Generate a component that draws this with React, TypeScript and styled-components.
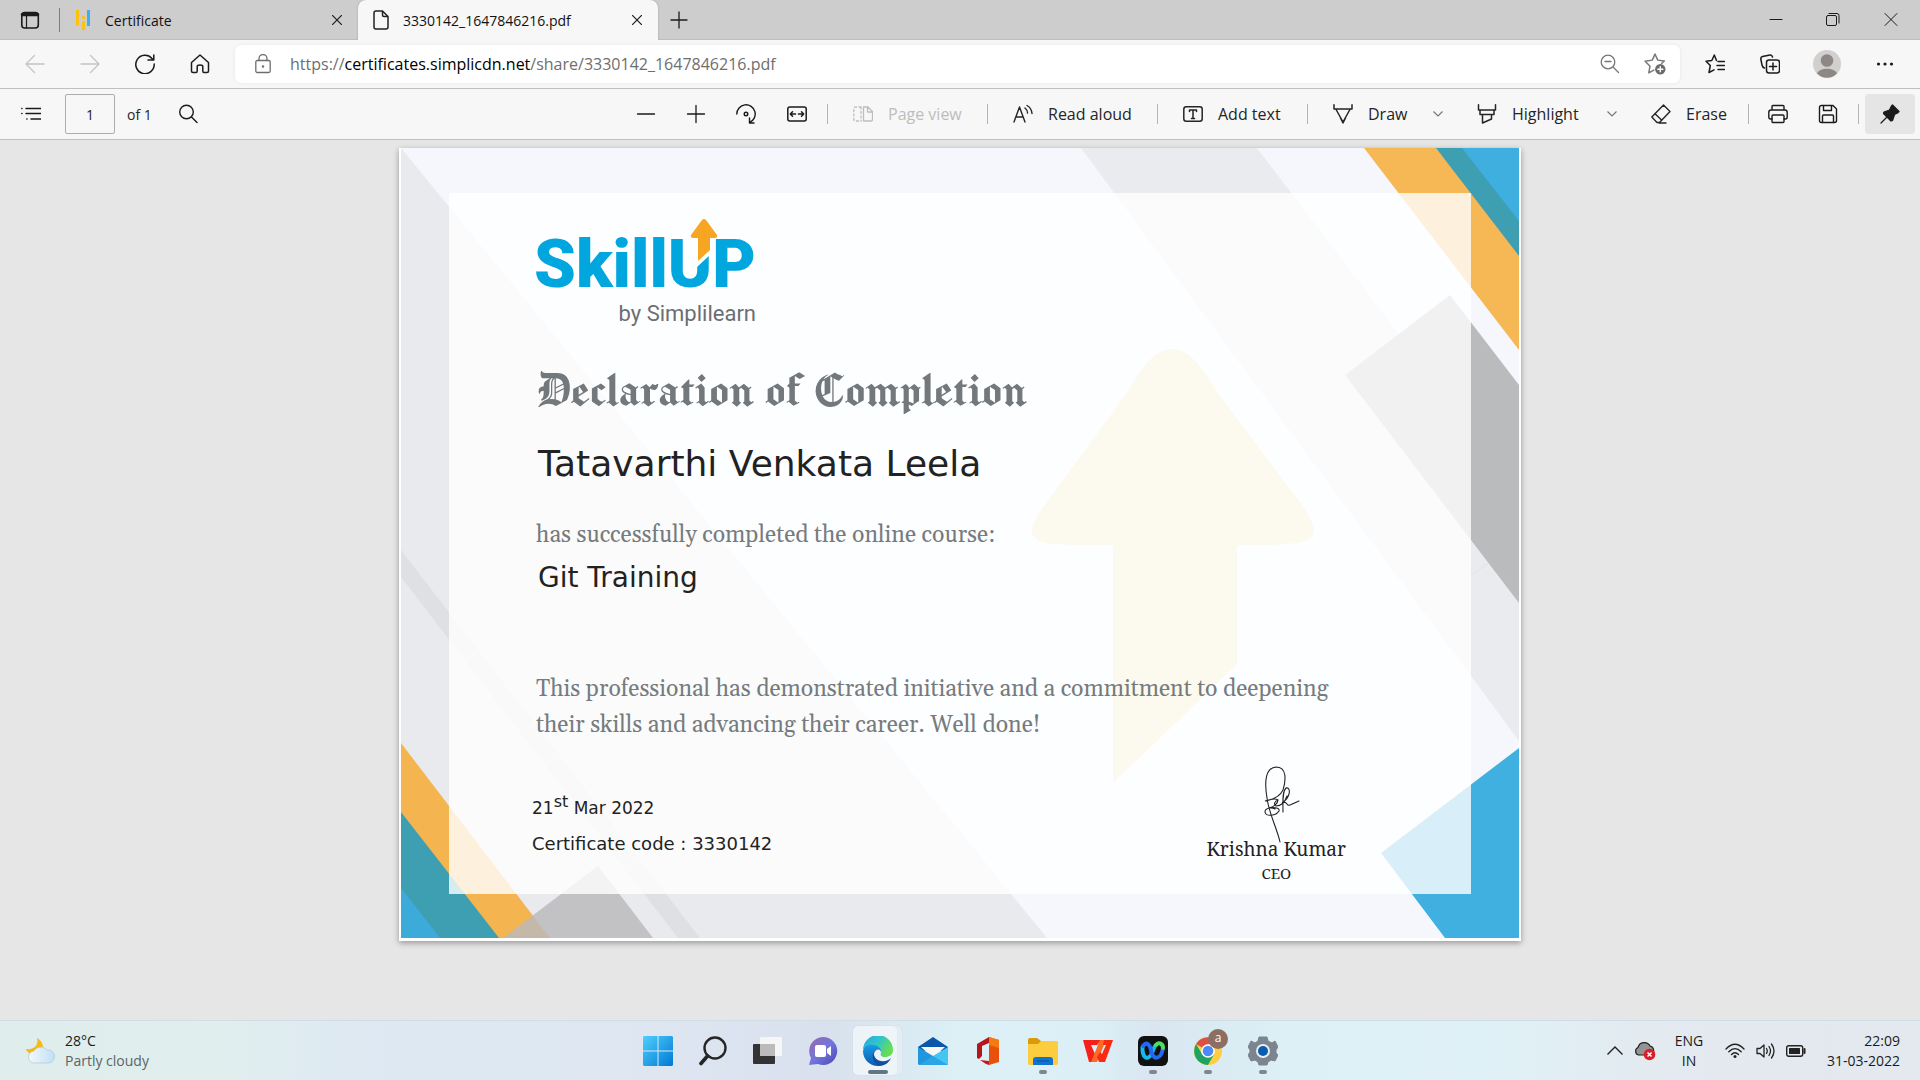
import React from "react";
import styled, { createGlobalStyle, css } from "styled-components";

const ui = `"Segoe UI", "Open Sans", "Noto Sans", sans-serif`;
const serif = `Gelasio, Georgia, "Liberation Serif", serif`;
const blackletter = `"Old English Text MT", "Manufacturing Consent", "UnifrakturMaguntia", "Liberation Serif", serif`;
const humanist = `"DejaVu Sans", Verdana, sans-serif`;

const GlobalStyle = createGlobalStyle`
  * { box-sizing: border-box; }
  body { margin: 0; font-family: ${ui}; color: #1b1b1b; background: #e6e6e6; }
  button, input { font: inherit; color: inherit; }
  h1, h2, p { margin: 0; font-weight: 400; }
`;

const Screen = styled.div`
  display: flex;
  flex-direction: column;
  min-height: 100vh;
`;

/* ---------- shared ---------- */

const IconButton = styled.button<{ $w?: number; $faded?: boolean }>`
  display: flex;
  align-items: center;
  justify-content: center;
  flex: none;
  width: ${(p) => p.$w ?? 50}px;
  height: 40px;
  padding: 0;
  border: 0;
  border-radius: 4px;
  background: none;
  color: ${(p) => (p.$faded ? "#c4c4c4" : "#1b1b1b")};
`;

type IconProps = { children: React.ReactNode; size?: number; sw?: number };
const Icon = ({ children, size = 20, sw = 1.3 }: IconProps) => (
  <svg
    width={size}
    height={size}
    viewBox="0 0 20 20"
    fill="none"
    stroke="currentColor"
    strokeWidth={sw}
    strokeLinecap="round"
    strokeLinejoin="round"
    aria-hidden="true"
  >
    {children}
  </svg>
);

/* ---------- tab strip ---------- */

const TabStrip = styled.header`
  display: flex;
  align-items: stretch;
  height: 40px;
  background: #cdcdcd;
  box-shadow: inset 0 -1px 0 #bdbdbd;
`;

const TabMenu = styled.div`
  display: flex;
  align-items: center;
  width: 60px;
  &::after {
    content: "";
    width: 1px;
    height: 24px;
    background: #7c7c7c;
  }
`;

const Tab = styled.div<{ $active?: boolean }>`
  display: flex;
  align-items: center;
  gap: 14px;
  width: ${(p) => (p.$active ? 300 : 298)}px;
  padding: 0 6px 0 15px;
  font-size: 14px;
  color: #111;
  ${(p) =>
    p.$active &&
    css`
      border-radius: 8px 8px 0 0;
      background: #f7f7f7;
      box-shadow: 0 0 2px #999;
      clip-path: inset(0 -3px 0 -3px);
    `}
`;

const TabTitle = styled.span`
  flex: 1;
  white-space: nowrap;
`;

const WindowButtons = styled.div`
  display: flex;
  margin-left: auto;
`;

/* ---------- address bar ---------- */

const AddressRow = styled.nav`
  display: flex;
  align-items: center;
  height: 49px;
  padding: 0 8px 0 7px;
  background: #f7f7f7;
  border-bottom: 1px solid #bfbfbf;
`;

const AddressField = styled.div`
  display: flex;
  align-items: center;
  flex: 1;
  height: 38px;
  margin: 0 7px 0 8px;
  padding-right: 3px;
  border-radius: 6px;
  background: #fff;
  box-shadow: 0 0 4px rgba(0, 0, 0, 0.07);
  color: #6e6e6e;
`;

const Url = styled.div`
  flex: 1;
  font-size: 16px;
  line-height: 24px;
  white-space: nowrap;
  outline: none;
  b {
    font-weight: 400;
    color: #000;
  }
`;

const Avatar = styled.svg`
  width: 28px;
  height: 28px;
`;

/* ---------- document toolbar ---------- */

const Toolbar = styled.div`
  display: flex;
  align-items: center;
  height: 51px;
  padding: 0 5px 0 6px;
  background: #f7f7f7;
  border-bottom: 1px solid #bfbfbf;
  color: #252525;
`;

const PageInput = styled.input`
  width: 50px;
  height: 40px;
  margin: 0 12px 0 9px;
  padding: 0;
  border: 1px solid #adadad;
  border-radius: 2px;
  background: #f7f7f7;
  font-size: 14px;
  text-align: center;
`;

const PageCount = styled.label`
  width: 34px;
  font-size: 14px;
  white-space: nowrap;
`;

const Tools = styled.div`
  display: flex;
  align-items: center;
  margin-left: auto;
`;

const Tool = styled.button<{ $w: number }>`
  display: flex;
  align-items: center;
  gap: 15px;
  flex: none;
  width: ${(p) => p.$w}px;
  height: 40px;
  padding: 0 0 0 21px;
  border: 0;
  background: none;
  font-size: 16px;
  white-space: nowrap;
  &:disabled {
    color: #bdbdbd;
  }
  svg {
    flex: none;
  }
`;

const Divider = styled.span`
  width: 1px;
  height: 20px;
  margin: 0 4px 0 5px;
  background: #b5b5b5;
`;

const PinButton = styled(IconButton)`
  margin-left: 2px;
  background: #e5e5e5;
`;

/* ---------- certificate ---------- */

const Viewer = styled.main`
  display: flex;
  flex: 1;
  justify-content: center;
  align-items: flex-start;
  padding: 8px 0 40px;
  background: #e6e6e6;
`;

const Sheet = styled.article`
  width: 100%;
  max-width: 1122px;
  padding: 0 2px 3px;
  background: #fff;
  box-shadow: 0 2px 6px rgba(0, 0, 0, 0.35);
`;

const SheetBody = styled.div`
  position: relative;
  padding: 86px 173px 55px 131px;
`;

const Artwork = styled.svg`
  position: absolute;
  inset: 0;
  width: 100%;
  height: 100%;
`;

const Content = styled.div`
  position: relative;
  display: flex;
  flex-direction: column;
  align-items: flex-start;
`;

const Logo = styled.div`
  position: relative;
  display: flex;
  flex-direction: column;
  align-items: flex-end;
  gap: 6px;
  padding-left: 2px;
  font-family: Roboto, sans-serif;
`;

const LogoName = styled.span`
  font-size: 67px;
  font-weight: 900;
  line-height: 60px;
  color: #00a6dd;
`;

const LogoArrow = styled.svg`
  position: absolute;
  left: 157px;
  top: -16px;
  width: 30px;
  height: 54px;
`;

const LogoOwner = styled.span`
  font-size: 22px;
  line-height: 28px;
  color: #6d6e71;
`;

const Title = styled.h1`
  margin-top: 33px;
  padding-left: 4px;
  font-family: ${blackletter};
  font-size: 53px;
  line-height: 56px;
  color: #72787b;
  white-space: nowrap;
`;

const Recipient = styled.h2`
  margin-top: 25px;
  padding-left: 6px;
  font-family: ${humanist};
  font-size: 36px;
  line-height: 44px;
  color: #222;
`;

const Statement = styled.p<{ $top: number }>`
  margin-top: ${(p) => p.$top}px;
  padding-left: 4px;
  font-family: ${serif};
  font-size: 23px;
  line-height: 36px;
  color: #767b7e;
`;

const Course = styled.h2`
  margin-top: 6px;
  padding-left: 6px;
  font-family: ${humanist};
  font-size: 28px;
  line-height: 36px;
  color: #222;
`;

const Footer = styled.footer`
  display: flex;
  justify-content: space-between;
  align-items: flex-end;
  align-self: stretch;
  margin-top: 22px;
`;

const Issue = styled.div`
  padding-bottom: 21px;
  font-family: ${humanist};
  font-size: 18px;
  line-height: 36px;
  color: #222;
  time {
    display: block;
    font-size: 17px;
  }
  sup {
    font-size: 16px;
    line-height: 0;
  }
`;

const Signatory = styled.div`
  display: flex;
  flex-direction: column;
  align-items: center;
  font-family: "Noto Serif", ${serif};
  font-size: 15px;
  line-height: 20px;
  color: #222;
  strong {
    margin: -6px 0 2px;
    font-size: 19px;
    font-weight: 400;
    line-height: 24px;
  }
`;

/* ---------- taskbar ---------- */

const Taskbar = styled.footer`
  display: grid;
  grid-template-columns: 1fr auto 1fr;
  height: 60px;
  border-top: 1px solid #cfdde4;
  background: linear-gradient(
    90deg,
    #dfeeed 0%,
    #e0eeee 12%,
    #dee9f3 19%,
    #dde6f1 34%,
    #d8e1ed 43%,
    #dcf0f6 50%,
    #dceff6 57%,
    #d9e6f1 60%,
    #dcf0f5 67%,
    #dff1f6 78%,
    #e3eaf0 86%,
    #e4e8ef 100%
  );
`;

const Weather = styled.button`
  display: flex;
  align-items: center;
  justify-self: start;
  gap: 9px;
  padding: 0 0 0 26px;
  border: 0;
  background: none;
  text-align: left;
  font-size: 14px;
  line-height: 20px;
  span {
    display: block;
    color: #5b6466;
  }
`;

const Apps = styled.div`
  display: flex;
  align-items: center;
`;

const App_ = styled.button<{ $active?: boolean; $running?: boolean }>`
  position: relative;
  display: flex;
  align-items: center;
  justify-content: center;
  width: 49px;
  height: 49px;
  margin: 0 3px;
  padding: 0;
  border: 0;
  border-radius: 5px;
  background: ${(p) => (p.$active ? "rgba(255,255,255,0.55)" : "none")};
  box-shadow: ${(p) =>
    p.$active ? "0 0 1px #b7c4cf, inset -5px 0 0 rgba(215,228,238,0.5)" : "none"};
  &::after {
    content: "";
    position: absolute;
    bottom: 1px;
    width: ${(p) => (p.$active ? 20 : 8)}px;
    height: 4px;
    border-radius: 2px;
    background: ${(p) =>
      p.$active ? "#5f7686" : p.$running ? "#7f868c" : "transparent"};
  }
`;

const Badge = styled.span`
  position: absolute;
  top: 3px;
  right: 4px;
  width: 20px;
  height: 20px;
  border-radius: 50%;
  background: #8d6e63;
  color: #fff;
  font-size: 12px;
  line-height: 18px;
`;

const Tray = styled.div`
  display: flex;
  align-items: center;
  justify-self: end;
  padding-right: 20px;
  font-size: 14px;
  line-height: 20px;
`;

const TrayButton = styled.button<{ $w: number; $align?: string }>`
  display: block;
  width: ${(p) => p.$w}px;
  padding: 0;
  border: 0;
  background: none;
  text-align: ${(p) => p.$align ?? "center"};
  white-space: nowrap;
  svg {
    display: block;
    margin: 0 auto;
  }
`;

/* ---------- drawings ---------- */

const CloseIcon = () => (
  <svg width="10" height="10" viewBox="0 0 10 10" stroke="currentColor" strokeWidth="1.2" aria-hidden="true">
    <path d="M0 0 10 10M10 0 0 10" />
  </svg>
);

const Chevron = () => (
  <svg width="10" height="6" viewBox="0 0 10 6" fill="none" stroke="#777" strokeWidth="1.2" aria-hidden="true">
    <path d="M.5.5 5 5 9.500.5" />
  </svg>
);

const Background = () => (
  <Artwork viewBox="0 0 1118 790" preserveAspectRatio="none" aria-hidden="true">
    <rect width="1118" height="790" fill="#f6f7fc" />
    <path d="M0 0 646 790H0Z" fill="#e9eaee" />
    <path d="M0 402 299 790H277L0 429Z" fill="#dfe0e4" />
    <path d="M0 595 149 790H0Z" fill="#f4b450" />
    <path d="M0 664 98 790H0Z" fill="#3e9fb2" />
    <path d="M0 740 39 790H0Z" fill="#3dabda" />
    <path d="M197 718 252 790H102Z" fill="#b9babc" fillOpacity=".82" />
    <path d="M680 0H856L1118 344V593Z" fill="#eaebef" />
    <path d="M1087 415 1021 465" stroke="#e2e3e7" />
    <path d="M944 227 1049 147 1118 237V455Z" fill="#babbbd" />
    <path d="M963 0H1118V202Z" fill="#f6b755" />
    <path d="M1035 0H1118V108Z" fill="#3e9fb3" />
    <path d="M1061 0H1118V73Z" fill="#3eafde" />
    <path d="M1118 600 980 705 1044 790H1118Z" fill="#3fb0df" />
    <rect x="48" y="45" width="1022" height="701" fill="#fff" fillOpacity=".8" />
    <path
      d="M771 201C749 201 737 229 723 249L661 333C645 356 631 371 631 384 631 397 660 397 690 397H712V635L836 516V397H853C890 397 913 396 913 382 911 368 898 352 883 333L820 249C806 230 793 201 771 201Z"
      fill="#fcfaee"
    />
  </Artwork>
);

const Signature = () => (
  <svg width="50" height="77" viewBox="-12 0 50 77" fill="none" stroke="#222" strokeWidth="1.1" strokeLinecap="round" aria-hidden="true">
    <path d="M17 76C14 62 6 48 4 32 1 14 3 2 13 1 24 1 23 14 20 24 16 32 8 34 2 35 8 33 13 32 15 34 15 38 10 41 6 42 12 41 17 42 16 45 13 50 3 51 2 46 2 42 8 41 12 43M15 34C12 35 10 38 13 40 18 40 22 36 24 30M20 46C20 36 19 26 23 22 28 21 28 31 19 37 25 34 23 41 27 39L36 35" />
  </svg>
);

const StartIcon = () => (
  <svg width="30" height="30" viewBox="0 0 30 30" aria-hidden="true">
    <defs>
      <linearGradient id="start" x1="0" y1="0" x2="1" y2="1">
        <stop stopColor="#4fd0fc" />
        <stop offset="1" stopColor="#0078d4" />
      </linearGradient>
    </defs>
    <path fill="url(#start)" d="M1 0H14.500V14.500H0V1ZM15.500 0H29L30 1V14.500H15.500ZM0 15.500H14.500V30H1L0 29ZM15.500 15.500H30V29L29 30H15.500Z" />
  </svg>
);

const SearchIcon = () => (
  <svg width="30" height="30" viewBox="0 0 30 30" fill="none" stroke="#262626" aria-hidden="true">
    <circle cx="17" cy="12" r="10.500" strokeWidth="2.400" />
    <path d="M9.500 20 3 27.500" strokeWidth="3.600" strokeLinecap="round" />
  </svg>
);

const TaskViewIcon = () => (
  <svg width="30" height="30" viewBox="0 0 30 30" aria-hidden="true">
    <rect x="0" y="8" width="22" height="20" rx="1" fill="#333" />
    <rect x="7" y="1" width="22" height="19" rx="1" fill="#f6f6f6" />
    <path d="M7 8H22V20H7Z" fill="#bbb" />
  </svg>
);

const ChatIcon = () => (
  <svg width="30" height="30" viewBox="0 0 30 30" aria-hidden="true">
    <defs>
      <linearGradient id="chat" x1="0" y1="0" x2="1" y2="1">
        <stop stopColor="#9a6aa8" />
        <stop offset=".5" stopColor="#7276dd" />
        <stop offset="1" stopColor="#4b47b4" />
      </linearGradient>
    </defs>
    <path d="M15 1A14 14 0 1 1 10 28L1 29 3 22A14 14 0 0 1 15 1Z" fill="url(#chat)" />
    <rect x="7" y="9" width="11" height="12" rx="2" fill="#fff" />
    <path d="M19 13 23 10V20L19 17Z" fill="#fff" />
  </svg>
);

const EdgeIcon = () => (
  <svg width="30" height="30" viewBox="0 0 30 30" aria-hidden="true">
    <defs>
      <linearGradient id="edgeTop" x1="0" y1="0" x2="1" y2=".5">
        <stop stopColor="#2aa5de" />
        <stop offset=".5" stopColor="#2fc3cf" />
        <stop offset="1" stopColor="#65df50" />
      </linearGradient>
      <linearGradient id="edgeSide" x1="0" y1="0" x2="0" y2="1">
        <stop stopColor="#1a9be4" />
        <stop offset="1" stopColor="#0b5cb0" />
      </linearGradient>
    </defs>
    <path d="M0 14A15 15 0 0 1 30 14C30 19 26 21 22 21 18 21 17 19 18 17 19 13 15 10 10 10 5 10 1 12 0 14Z" fill="url(#edgeTop)" />
    <path d="M0 15C1 11 5 8 10 9 15 9 19 13 18 16 17 12 12 13 11 18 11 23 14 28 19 29.500 8 32 0 24 0 15Z" fill="url(#edgeSide)" />
    <path d="M12 15C9 18 12 24 18 25 22 26 26 24 28 22 26 27 21 30 16 30 9 27 8 18 12 15Z" fill="#11519d" />
  </svg>
);

const MailIcon = () => (
  <svg width="30" height="30" viewBox="0 0 30 30" aria-hidden="true">
    <path d="M0 11 15 1 30 11V15H0Z" fill="#0a56a8" />
    <path d="M3 11H27L15 22Z" fill="#f7f7f7" />
    <path d="M0 11 30 29H1L0 28Z" fill="#2196dc" />
    <path d="M30 11V28L29 29 15 20Z" fill="#43c6f2" />
    <path d="M15 20 30 29H1Z" fill="#2aa5e6" />
  </svg>
);

const OfficeIcon = () => (
  <svg width="30" height="30" viewBox="0 0 30 30" aria-hidden="true">
    <path d="M16 1 26 4V26L16 29Z" fill="#e8500c" />
    <path d="M16 1V7L9 10V20L6 23 4 22V8Z" fill="#b4161b" />
    <path d="M7 24 16 25V29L13 28Z" fill="#c41c1c" />
    <path d="M16 1 26 4V12L16 9Z" fill="#f37b10" />
  </svg>
);

const FolderIcon = () => (
  <svg width="30" height="30" viewBox="0 0 30 30" aria-hidden="true">
    <path d="M0 4Q0 2 2 2H9L13 5V11H0Z" fill="#dc9a0a" />
    <path d="M0 8H10L13 5H29L30 6V28L29 29H1L0 28Z" fill="#fdcd40" />
    <path d="M5 29V24Q5 21 8 21H22Q25 21 25 24V29Z" fill="#1173cf" />
    <path d="M9 25H21" stroke="#0b4f9c" />
  </svg>
);

const WpsIcon = () => (
  <svg width="30" height="30" viewBox="0 0 30 30" aria-hidden="true">
    <path d="M0 4H18L14 9H8L12 18 9 26H6Z" fill="#f8201b" />
    <path d="M8 26 17 4H23L14 26Z" fill="#ff6a20" />
    <path d="M21 4H30L22 26H16L14 21 17 16 19 18 23 9H20Z" fill="#f92c12" />
  </svg>
);

const WebexIcon = () => (
  <svg width="30" height="30" viewBox="0 0 30 30" fill="none" aria-hidden="true">
    <rect width="30" height="30" rx="6" fill="#111" />
    <path d="M4.500 11C4 21 9 25 13 19 15 16 16 10 18 9" stroke="#13b9ed" strokeWidth="4" strokeLinecap="round" />
    <path d="M5 10C9 5 12 9 13 14 15 25 23 24 25 12" stroke="#2468f2" strokeWidth="4" strokeLinecap="round" />
    <path d="M18 9C20 6 25 7 25 12" stroke="#4be05b" strokeWidth="4" strokeLinecap="round" />
  </svg>
);

const ChromeIcon = () => (
  <svg width="28" height="28" viewBox="0 0 28 28" aria-hidden="true">
    <circle cx="14" cy="14" r="14" fill="#ffcd40" />
    <path d="M14 14 2 7A14 14 0 0 1 26 7H14Z" fill="#dd5144" />
    <path d="M2 7A14 14 0 0 0 14 28L20 17.500 14 14 8 17Z" fill="#1da462" />
    <circle cx="14" cy="14" r="6.800" fill="#fff" />
    <circle cx="14" cy="14" r="5.300" fill="#4c8bf5" />
  </svg>
);

const SettingsIcon = () => (
  <svg width="30" height="30" viewBox="0 0 30 30" aria-hidden="true">
    <path
      d="M11 1H19L20 5 24 7 27 5 30 11 28 14V17L30 19 27 25 23 24 20 26 19 29H11L10 26 7 24 3 25 0 19 2 16V14L0 11 3 5 7 7 10 5Z"
      fill="#7c858f"
      stroke="#7c858f"
      strokeLinejoin="round"
    />
    <circle cx="15" cy="15" r="7" fill="#e9eef2" />
    <circle cx="15" cy="15" r="5" fill="#0b5cad" />
  </svg>
);

const apps = [
  { name: "Start", icon: <StartIcon /> },
  { name: "Search", icon: <SearchIcon /> },
  { name: "Task View", icon: <TaskViewIcon /> },
  { name: "Chat", icon: <ChatIcon /> },
  { name: "Microsoft Edge", icon: <EdgeIcon />, active: true },
  { name: "Mail", icon: <MailIcon /> },
  { name: "Office", icon: <OfficeIcon /> },
  { name: "File Explorer", icon: <FolderIcon />, running: true },
  { name: "WPS Office", icon: <WpsIcon /> },
  { name: "Webex", icon: <WebexIcon />, running: true },
  { name: "Google Chrome", icon: <ChromeIcon />, running: true, badge: "a" },
  { name: "Settings", icon: <SettingsIcon />, running: true },
];

/* ---------- page ---------- */

export default function App() {
  return (
    <Screen>
      <GlobalStyle />
      <TabStrip>
        <TabMenu>
          <IconButton $w={59} aria-label="Tab actions">
            <Icon sw={1.6}>
              <rect x="1.800" y="2.500" width="16.500" height="15.500" rx="3" />
              <path d="M2.500 4.500H17.500" strokeWidth="3.500" />
              <path d="M6.500 6V18" strokeWidth="1.200" />
            </Icon>
          </IconButton>
        </TabMenu>
        <Tab>
          <svg width="16" height="20" viewBox="0 0 16 20" aria-hidden="true">
            <path d="M2.500 0V15.500M8.500 11V20" stroke="#fdc20f" strokeWidth="3" />
            <path d="M13.500 0V16" stroke="#3bb2ec" strokeWidth="3" />
            <circle cx="8.500" cy="7.500" r="1.700" fill="#fdc20f" />
          </svg>
          <TabTitle>Certificate</TabTitle>
          <IconButton $w={30} aria-label="Close tab">
            <CloseIcon />
          </IconButton>
        </Tab>
        <Tab $active>
          <svg width="16" height="20" viewBox="1 0 16 20" fill="none" stroke="#222" strokeWidth="1.500" aria-hidden="true">
            <path d="M4 1H10.500L16 6.500V17Q16 19 14 19H4Q2 19 2 17V3Q2 1 4 1ZM10.500 1V5Q10.500 6.500 12 6.500H16" />
          </svg>
          <TabTitle>3330142_1647846216.pdf</TabTitle>
          <IconButton $w={30} aria-label="Close tab">
            <CloseIcon />
          </IconButton>
        </Tab>
        <IconButton $w={42} aria-label="New tab">
          <Icon>
            <path d="M10 2V18M2 10H18" />
          </Icon>
        </IconButton>
        <WindowButtons>
          <IconButton $w={57} aria-label="Minimize">
            <Icon sw={1}>
              <path d="M4 9.500H16" />
            </Icon>
          </IconButton>
          <IconButton $w={58} aria-label="Restore">
            <Icon sw={1}>
              <rect x="3.500" y="5.500" width="10" height="10" rx="1.500" />
              <path d="M6 3.500H14Q16 3.500 16 5.500V13" />
            </Icon>
          </IconButton>
          <IconButton $w={58} aria-label="Close">
            <Icon sw={1}>
              <path d="M4 3.500 16 15.500M16 3.500 4 15.500" />
            </Icon>
          </IconButton>
        </WindowButtons>
      </TabStrip>

      <AddressRow>
        <IconButton $w={55} $faded aria-label="Back">
          <Icon>
            <path d="M19 10H1M9.500 1.500 1 10 9.500 18.500" />
          </Icon>
        </IconButton>
        <IconButton $w={55} $faded aria-label="Forward">
          <Icon>
            <path d="M1 10H19M10.500 1.500 19 10 10.500 18.500" />
          </Icon>
        </IconButton>
        <IconButton $w={55} aria-label="Refresh">
          <Icon sw={1.5}>
            <path d="M19.200 10A9.200 9.200 0 1 1 17 4.500L18.500 6M18.800 1V6H13" />
          </Icon>
        </IconButton>
        <IconButton $w={55} aria-label="Home">
          <Icon sw={1.5}>
            <path d="M1.500 8.500 10 1 18.500 8.500V17Q18.500 18.500 17 18.500H14Q12.800 18.500 12.800 17V12.500Q12.800 11 10 11T7.200 12.500V17Q7.200 18.500 6 18.500H3Q1.500 18.500 1.500 17Z" />
          </Icon>
        </IconButton>
        <AddressField>
          <IconButton as="span" $w={55}>
            <Icon sw={1.3}>
              <g stroke="#6e6e6e">
                <rect x="2.800" y="6.500" width="14.400" height="12" rx="1.500" />
                <path d="M6 6.500V4.500a4 4 0 0 1 8 0V6.500" />
                <circle cx="10" cy="12.500" r=".6" fill="#6e6e6e" />
              </g>
            </Icon>
          </IconButton>
          <Url role="textbox" aria-label="Address" contentEditable suppressContentEditableWarning spellCheck={false}>
            https://<b>certificates.simplicdn.net</b>/share/3330142_1647846216.pdf
          </Url>
          <IconButton $w={45} aria-label="Zoom level">
            <Icon>
              <g stroke="#767676">
                <circle cx="8" cy="8" r="6.800" />
                <path d="M13 13 18.500 18.500M5 7.500H11" />
              </g>
            </Icon>
          </IconButton>
          <IconButton $w={45} aria-label="Add to favorites">
            <Icon size={22}>
              <g stroke="#767676">
                <path d="M10 1 12.500 6.500 18.500 7.200 16 9.500M10 1 7.500 6.500 1 7.500 5.500 12 4.300 18 9 15.500" />
                <circle cx="14.800" cy="14.800" r="4.700" fill="#6b6b6b" stroke="none" />
                <path d="M14.800 12.500V17.100M12.500 14.800H17.100" stroke="#fff" />
              </g>
            </Icon>
          </IconButton>
        </AddressField>
        <IconButton $w={55} aria-label="Favorites">
          <Icon sw={1.5}>
            <path d="M11.500 6.500 9.300 1 6.800 6.500 1 7.200 5.300 11.500 4 18.500 9 15.800M13 7.500H19.500M12 11.500H19.500M13 15.500H19.500" />
          </Icon>
        </IconButton>
        <IconButton $w={55} aria-label="Collections">
          <Icon sw={1.5}>
            <rect x="6.500" y="6" width="13" height="13" rx="2.500" />
            <path d="M13 9V16M9.500 12.500H16.500M4.500 14Q2.500 13.500 2 11L.8 5Q.6 3 2.500 2.500L10 1Q12 .7 12.500 3" />
          </Icon>
        </IconButton>
        <IconButton $w={60} aria-label="Profile">
          <Avatar viewBox="0 0 28 28" aria-hidden="true">
            <circle cx="14" cy="14" r="14" fill="#d2d0ce" />
            <circle cx="14" cy="10.500" r="6.300" fill="#8d8885" />
            <path d="M4 23.500C6 17 22 17 24 23.500A14 14 0 0 1 4 23.500Z" fill="#8d8885" />
          </Avatar>
        </IconButton>
        <IconButton $w={55} aria-label="Settings and more">
          <Icon>
            <g fill="currentColor" stroke="none">
              <circle cx="3.500" cy="10" r="1.600" />
              <circle cx="10" cy="10" r="1.600" />
              <circle cx="16.500" cy="10" r="1.600" />
            </g>
          </Icon>
        </IconButton>
      </AddressRow>

      <Toolbar>
        <IconButton aria-label="Table of contents">
          <Icon sw={1.5}>
            <path d="M5 4.500H20M5 9.500H20M10 15H20M.8 4.500H1M.8 9.500H1M5.800 15H6" />
          </Icon>
        </IconButton>
        <PageInput id="page" defaultValue="1" aria-label="Page number" />
        <PageCount htmlFor="page">of 1</PageCount>
        <IconButton $w={54} aria-label="Find">
          <Icon sw={1.4}>
            <circle cx="8.500" cy="8" r="6.800" />
            <path d="M13.500 13 19 18.500" />
          </Icon>
        </IconButton>
        <Tools>
          <IconButton aria-label="Zoom out">
            <Icon>
              <path d="M1.500 10H18.500" />
            </Icon>
          </IconButton>
          <IconButton aria-label="Zoom in">
            <Icon>
              <path d="M10 1.500V18.500M1.500 10H18.500" />
            </Icon>
          </IconButton>
          <IconButton aria-label="Rotate">
            <Icon sw={1.4}>
              <path d="M.8 10A9.200 9.200 0 1 1 13.500 18.500M13.500 14V19H18" />
              <circle cx="10" cy="10" r="1.800" />
            </Icon>
          </IconButton>
          <IconButton $w={51} aria-label="Fit to width">
            <Icon sw={1.5}>
              <rect x=".8" y="3" width="18.400" height="14" rx="2" />
              <path d="M3.500 10H8.500M5.500 7.800 3.300 10 5.500 12.200M11.500 10H16.500M14.500 7.800 16.700 10 14.500 12.200" />
            </Icon>
          </IconButton>
          <Divider />
          <Tool $w={150} disabled>
            <Icon>
              <path d="M10.500 3V17H18Q19.500 17 19.500 15.500V7.500L15 3ZM14.500 3V8H19.500" />
              <path d="M8 3H2.500Q.8 3 .8 4.500V15.500Q.8 17 2.500 17H8M8 3V17" strokeDasharray="2 2.400" />
            </Icon>
            Page view
          </Tool>
          <Divider />
          <Tool $w={160}>
            <Icon sw={1.4}>
              <path d="M1 18 6.500 3 12 18M3 13H10M12 4Q14.500 6 14.500 9M14 1.500Q18.500 4 19 9.500" />
            </Icon>
            Read aloud
          </Tool>
          <Divider />
          <Tool $w={140}>
            <Icon sw={1.5}>
              <rect x=".8" y="2.800" width="18.400" height="14.400" rx="2.500" />
              <path d="M6.500 7.500V6H13.500V7.500M10 6V14.500M8.500 14.500H11.500" />
            </Icon>
            Add text
          </Tool>
          <Divider />
          <Tool $w={108}>
            <Icon sw={1.5}>
              <path d="M1 .8V5H19V.8M2.800 5 10 18 17.200 5M7.500 14 10 19 12.500 14" />
            </Icon>
            Draw
          </Tool>
          <IconButton $w={36} aria-label="Draw options">
            <Chevron />
          </IconButton>
          <Tool $w={138}>
            <Icon sw={1.5}>
              <path d="M1.500.8V6H18.500V.8M3 6V10.500H17V6M5.500 10.500V19L14.500 15V10.500" />
            </Icon>
            Highlight
          </Tool>
          <IconButton $w={36} aria-label="Highlight options">
            <Chevron />
          </IconButton>
          <Tool $w={113}>
            <Icon sw={1.4}>
              <path d="M12.500 1 19 7.500 8.500 18.500H6L.8 13 12.500 1ZM4 9.800 10.800 16.200M8 19H15" />
            </Icon>
            Erase
          </Tool>
          <Divider />
          <IconButton aria-label="Print">
            <Icon sw={1.4}>
              <path d="M4 6V2.500Q4 1.500 5 1.500H15Q16 1.500 16 2.500V6M4 15H2.500Q.8 15 .8 13V8.500Q.8 6 3 6H17Q19.200 6 19.200 8.500V13Q19.200 15 17.500 15H16" />
              <rect x="4" y="11" width="12" height="7.500" rx="1" />
            </Icon>
          </IconButton>
          <IconButton aria-label="Save">
            <Icon sw={1.4}>
              <path d="M3.500 1.500H15L18.500 5V16.500Q18.500 18.500 16.500 18.500H3.500Q1.500 18.500 1.500 16.500V3.500Q1.500 1.500 3.500 1.500ZM5.500 1.500V6.500H13.500V1.500M4.500 18.500V12Q4.500 11 5.500 11H14.500Q15.500 11 15.500 12V18.500" />
            </Icon>
          </IconButton>
          <Divider />
          <PinButton aria-label="Unpin toolbar">
            <Icon>
              <path d="M12.500 1 19 7.500 17.500 9 14.500 10.500 12.500 16.500 11 17 3.500 9.500 4 8 9.500 6 11.500 2Z" fill="currentColor" />
              <path d="M7 13 1 19" />
            </Icon>
          </PinButton>
        </Tools>
      </Toolbar>

      <Viewer>
        <Sheet>
          <SheetBody>
            <Background />
            <Content>
              <Logo>
                <LogoName>SkillUP</LogoName>
                <LogoArrow viewBox="0 0 30 54" aria-hidden="true">
                  <path d="M8 16H22V36L8 49Z" fill="#fff" />
                  <path d="M15 1Q16 1 17 2L28 17Q29 20 26 20H21V32L9 43V20H4Q1 20 2 17L13 2Q14 1 15 1Z" fill="#f6a623" />
                </LogoArrow>
                <LogoOwner>by Simplilearn</LogoOwner>
              </Logo>
              <Title>Declaration of Completion</Title>
              <Recipient>Tatavarthi Venkata Leela</Recipient>
              <Statement $top={32}>has successfully completed the online course:</Statement>
              <Course>Git Training</Course>
              <Statement $top={76}>
                This professional has demonstrated initiative and a commitment to deepening their skills and advancing
                their career. Well done!
              </Statement>
              <Footer>
                <Issue>
                  <time dateTime="2022-03-21">
                    21<sup>st</sup> Mar 2022
                  </time>
                  <div>Certificate code : 3330142</div>
                </Issue>
                <Signatory>
                  <Signature />
                  <strong>Krishna Kumar</strong>
                  CEO
                </Signatory>
              </Footer>
            </Content>
          </SheetBody>
        </Sheet>
      </Viewer>

      <Taskbar>
        <Weather>
          <svg width="30" height="28" viewBox="0 0 30 28" aria-hidden="true">
            <defs>
              <linearGradient id="cloud" x1="0" y1="0" x2="1" y2="0">
                <stop stopColor="#f4f7fc" />
                <stop offset="1" stopColor="#bfe0f6" />
              </linearGradient>
            </defs>
            <path d="M11 1C19 5 19 16 10 17 5 18 1 16 0 12 8 13 13 8 11 1Z" fill="#fbb910" />
            <path d="M9 26A6 6 0 0 1 8 14 8 8 0 0 1 21 13 6.500 6.500 0 0 1 23 26Z" fill="url(#cloud)" stroke="#a9bfd0" strokeWidth=".6" />
          </svg>
          <div>
            28°C<span>Partly cloudy</span>
          </div>
        </Weather>
        <Apps>
          {apps.map((a) => (
            <App_ key={a.name} aria-label={a.name} $active={a.active} $running={a.running}>
              {a.icon}
              {a.badge && <Badge>{a.badge}</Badge>}
            </App_>
          ))}
        </Apps>
        <Tray>
          <TrayButton $w={30} aria-label="Show hidden icons">
            <svg width="16" height="9" viewBox="0 0 16 9" fill="none" stroke="#222" strokeWidth="1.400">
              <path d="M.5 8.500 8 1 15.500 8.500" />
            </svg>
          </TrayButton>
          <TrayButton $w={30} aria-label="OneDrive">
            <svg width="22" height="20" viewBox="0 0 22 20">
              <path d="M4.500 14A4 4 0 0 1 4 6.500 6.500 6.500 0 0 1 16 5 4.800 4.800 0 0 1 17 14Z" fill="#949494" stroke="#222" strokeWidth="1.200" />
              <circle cx="15.500" cy="13.500" r="5.800" fill="#d9202a" />
              <path d="M13.500 11.500 17.500 15.500M17.500 11.500 13.500 15.500" stroke="#fff" strokeWidth="1.500" />
            </svg>
          </TrayButton>
          <TrayButton $w={58}>
            ENG
            <br />
            IN
          </TrayButton>
          <TrayButton $w={34} aria-label="Network">
            <svg width="20" height="16" viewBox="0 0 20 16" fill="none" stroke="#222" strokeWidth="1.400" strokeLinecap="round">
              <path d="M1 6Q10-3.500 19 6M3.800 8.800Q10 2.500 16.200 8.800M6.500 11.500Q10 8 13.500 11.500" />
              <circle cx="10" cy="13.500" r="1.500" fill="#222" stroke="none" />
            </svg>
          </TrayButton>
          <TrayButton $w={28} aria-label="Volume">
            <svg width="20" height="16" viewBox="0 0 20 16" fill="none" stroke="#222" strokeWidth="1.300" strokeLinecap="round" strokeLinejoin="round">
              <path d="M1 5.500H4L8 2V14L4 10.500H1ZM10.500 5.500Q12 8 10.500 10.500M13 3.500Q16 8 13 12.500M15.500 1Q20.500 8 15.500 15" />
            </svg>
          </TrayButton>
          <TrayButton $w={32} aria-label="Battery">
            <svg width="20" height="12" viewBox="0 0 20 12" fill="none" stroke="#222" strokeWidth="1.400">
              <rect x=".7" y=".7" width="16" height="10.600" rx="2" />
              <rect x="3" y="3" width="11" height="6" rx=".5" fill="#222" stroke="none" />
              <path d="M18.500 4V8" strokeWidth="2" strokeLinecap="round" />
            </svg>
          </TrayButton>
          <TrayButton $w={88} $align="right">
            22:09
            <br />
            31-03-2022
          </TrayButton>
        </Tray>
      </Taskbar>
    </Screen>
  );
}
